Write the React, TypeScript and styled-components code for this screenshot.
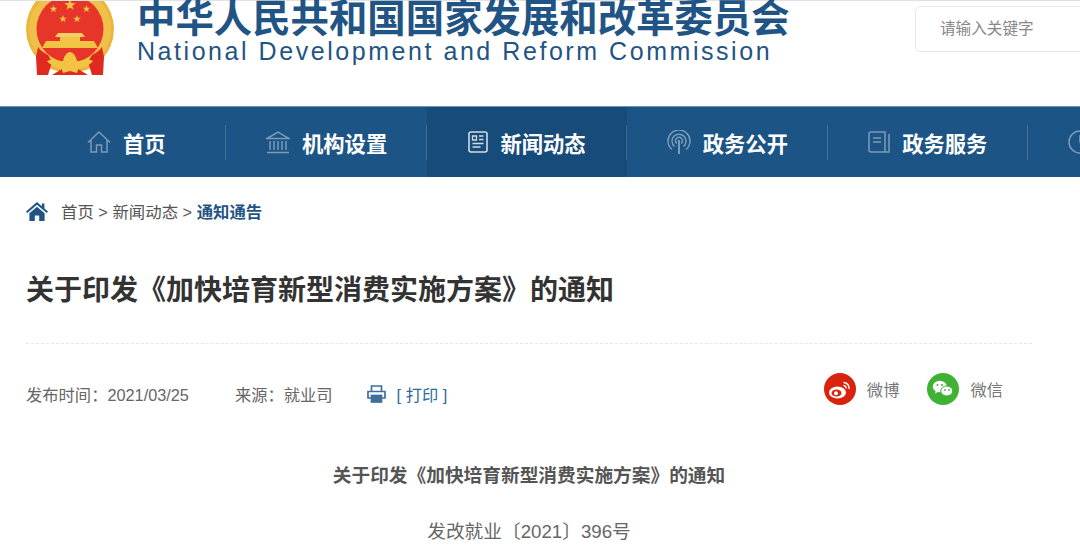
import styled, { createGlobalStyle } from "styled-components";

const GlobalStyle = createGlobalStyle`
  html, body {
    margin: 0;
    padding: 0;
    background: #fff;
    font-family: "Liberation Sans", "Noto Sans CJK SC", sans-serif;
  }
`;

const starPoints = (cx: number, cy: number, r: number) => {
  const pts: string[] = [];
  for (let i = 0; i < 10; i++) {
    const rad = i % 2 === 0 ? r : r * 0.4;
    const a = -Math.PI / 2 + (i * Math.PI) / 5;
    pts.push(`${(cx + rad * Math.cos(a)).toFixed(2)},${(cy + rad * Math.sin(a)).toFixed(2)}`);
  }
  return pts.join(" ");
};

const Emblem = () => (
  <svg width="88" height="75" viewBox="26 0 88 75" style={{ flexShrink: 0 }}>
    <circle cx="70" cy="28" r="44" fill="#eab63c" />
    <circle cx="70" cy="28" r="41" fill="#f0c14a" />
    <circle cx="70" cy="28" r="33.5" fill="#e8352a" />
    <polygon points={starPoints(70, 4, 6)} fill="#f3c344" />
    <polygon points={starPoints(53.5, 8, 4)} fill="#f3c344" />
    <polygon points={starPoints(86.5, 8, 4)} fill="#f3c344" />
    <polygon points={starPoints(63, 18, 4)} fill="#f3c344" />
    <polygon points={starPoints(77, 18, 4)} fill="#f3c344" />
    <path d="M58 32h24l3 4H55z" fill="#f6ce67" />
    <rect x="60" y="36" width="20" height="4" fill="#f3c344" />
    <path d="M46 40h48l4 7H42z" fill="#f3c344" />
    <path d="M38 46c3 4 6 6 10 8l4 7-4 13H37l-1-18z" fill="#e02a1f" />
    <path d="M102 46c-3 4-6 6-10 8l-4 7 4 13h11l1-18z" fill="#e02a1f" />
    <path d="M52 74l10-6h16l10 6z" fill="#e02a1f" />
    <path d="M47 60c6-3 12 1 16 0 1-5 4-9 7-9s6 4 7 9c4 1 10-3 16 0-3 4-9 6-14 6l-2 6-7-2-7 2-2-6c-5 0-11-2-14-6z" fill="#f3c344" />
  </svg>
);

const iconStroke = "rgba(255,255,255,0.42)";

const HomeIcon = () => (
  <svg width="24" height="24" viewBox="0 0 24 24" fill="none" stroke={iconStroke} strokeWidth="1.5">
    <path d="M1 12.5L12 2l11 10.5M4 10v12h5.5v-7h5v7H20V10" />
  </svg>
);

const BankIcon = () => (
  <svg width="24" height="24" viewBox="0 0 24 24" fill="none" stroke={iconStroke} strokeWidth="1.5">
    <path d="M1 8.5L12 2l11 6.5zM4 11v9M8 11v9M12 11v9M16 11v9M20 11v9M1 22.5h22" />
  </svg>
);

const NewsIcon = () => (
  <svg width="20" height="24" viewBox="0 0 20 24" fill="none" stroke="rgba(255,255,255,0.8)" strokeWidth="1.6">
    <rect x="1" y="2" width="18" height="20" rx="2" />
    <path d="M4.5 6h4v4h-4zM11 6h4.5M11 9.5h4.5M4.5 13.5h11M4.5 17h8" strokeWidth="1.3" />
  </svg>
);

const SignalIcon = () => (
  <svg width="24" height="24" viewBox="0 0 24 24" fill="none" stroke={iconStroke} strokeWidth="1.5">
    <path d="M5 19.5a11 11 0 1 1 14 0M7.5 16.5a7 7 0 1 1 9 0M9.8 13.5a3.5 3.5 0 1 1 4.4 0" />
    <path d="M12 10v14" strokeWidth="2" />
  </svg>
);

const DocIcon = () => (
  <svg width="22" height="22" viewBox="0 0 22 22" fill="none" stroke={iconStroke} strokeWidth="1.5">
    <path d="M17 1H3a2 2 0 0 0-2 2v16a2 2 0 0 0 2 2h14zM21 3v18h-4M5 7h8M5 11h8" />
  </svg>
);

const ClockIcon = () => (
  <svg width="24" height="24" viewBox="0 0 24 24" fill="none" stroke={iconStroke} strokeWidth="1.5">
    <circle cx="12" cy="12" r="11" />
    <path d="M12 5v7h7" />
  </svg>
);

const BreadcrumbHome = () => (
  <svg width="22" height="19" viewBox="0 0 22 19" fill="#1f5484">
    <path d="M11 0L0 9.6l1.3 1.5L11 2.8l9.7 8.3L22 9.6l-3.6-3.1V1.5h-2.6v2.8z" />
    <path d="M11 4.8L3.4 11.2V19h5.4v-5.4h4.4V19h5.4v-7.8z" />
  </svg>
);

const PrinterIcon = () => (
  <svg width="19" height="18" viewBox="0 0 19 18" fill="none" stroke="#3f6f9c" strokeWidth="1.7">
    <path d="M4.5 6V1h10v5" />
    <path d="M4 13H1V6.5h17V13h-3" fill="none" />
    <rect x="4.5" y="10.5" width="10" height="6.5" fill="#3f6f9c" />
  </svg>
);

const WeiboIcon = () => (
  <svg width="32" height="32" viewBox="0 0 32 32">
    <circle cx="16" cy="16" r="16" fill="#d9230f" />
    <ellipse cx="13.5" cy="19.5" rx="8.5" ry="6" fill="#fff" />
    <ellipse cx="12.5" cy="20" rx="5" ry="3.6" fill="#d9230f" />
    <circle cx="12" cy="20.3" r="2" fill="#fff" />
    <path d="M19.5 9.5a5.5 5.5 0 0 1 5.5 6.5M19.5 12.5a2.6 2.6 0 0 1 2.6 3" fill="none" stroke="#fff" strokeWidth="1.5" />
  </svg>
);

const WechatIcon = () => (
  <svg width="32" height="32" viewBox="0 0 32 32">
    <circle cx="16" cy="16" r="16" fill="#3fb234" />
    <ellipse cx="12.8" cy="13.5" rx="7" ry="5.8" fill="#fff" />
    <path d="M9 17l-1 3.5 4-2z" fill="#fff" />
    <ellipse cx="19.8" cy="18" rx="6" ry="5" fill="#fff" stroke="#3fb234" strokeWidth="1" />
    <circle cx="10.5" cy="12" r="1" fill="#3fb234" />
    <circle cx="15" cy="12" r="1" fill="#3fb234" />
    <circle cx="18" cy="17" r="0.9" fill="#3fb234" />
    <circle cx="22" cy="17" r="0.9" fill="#3fb234" />
  </svg>
);

const navItems = [
  { label: "首页", icon: <HomeIcon /> },
  { label: "机构设置", icon: <BankIcon /> },
  { label: "新闻动态", icon: <NewsIcon />, active: true },
  { label: "政务公开", icon: <SignalIcon /> },
  { label: "政务服务", icon: <DocIcon /> },
  { label: "互动交流", icon: <ClockIcon /> },
];

export default function App() {
  return (
    <Page>
      <GlobalStyle />
      <Header>
        <Emblem />
        <Brand>
          <BrandCn>中华人民共和国国家发展和改革委员会</BrandCn>
          <BrandEn>National Development and Reform Commission</BrandEn>
        </Brand>
        <Search>请输入关键字</Search>
      </Header>
      <Nav>
        {navItems.map((item) => (
          <NavItem key={item.label} $active={item.active}>
            {item.icon}
            <span>{item.label}</span>
          </NavItem>
        ))}
      </Nav>
      <Main>
        <Breadcrumb>
          <BreadcrumbHome />
          <Trail>
            首页 &gt; 新闻动态 &gt; <b>通知通告</b>
          </Trail>
        </Breadcrumb>
        <Title>关于印发《加快培育新型消费实施方案》的通知</Title>
        <MetaRow>
          <MetaText>发布时间：2021/03/25</MetaText>
          <MetaText>来源：就业司</MetaText>
          <PrintLink>
            <PrinterIcon />
            <span>[ 打印 ]</span>
          </PrintLink>
          <Share>
            <ShareItem>
              <WeiboIcon />
              <span>微博</span>
            </ShareItem>
            <ShareItem>
              <WechatIcon />
              <span>微信</span>
            </ShareItem>
          </Share>
        </MetaRow>
        <ArticleHeading>关于印发《加快培育新型消费实施方案》的通知</ArticleHeading>
        <DocNumber>发改就业〔2021〕396号</DocNumber>
      </Main>
    </Page>
  );
}

const Page = styled.div`
  width: 1080px;
  height: 551px;
  overflow: hidden;
`;

const Header = styled.header`
  display: flex;
  align-items: flex-start;
  height: 105px;
  padding-left: 26px;
  border-top: 1px solid #e2e2e2;
  box-sizing: content-box;
`;

const Brand = styled.div`
  display: flex;
  flex-direction: column;
  flex-shrink: 0;
  width: 653px;
  margin-left: 23px;
  color: #1f5484;
  white-space: nowrap;
`;

const BrandCn = styled.div`
  font-size: 38.4px;
  line-height: 36px;
  font-weight: 700;
`;

const BrandEn = styled.div`
  font-size: 25px;
  line-height: 28px;
  letter-spacing: 2.55px;
`;

const Search = styled.div`
  flex-shrink: 0;
  width: 200px;
  height: 44px;
  margin: 5px 0 0 125px;
  padding-left: 24px;
  border: 1px solid #e8e8e8;
  border-radius: 5px;
  font-size: 15.6px;
  line-height: 44px;
  color: #888;
`;

const Nav = styled.nav`
  display: flex;
  height: 70px;
  padding-left: 26px;
  background: #1c5485;
  border-top: 1px solid #6f93b3;
`;

const NavItem = styled.div<{ $active?: boolean }>`
  position: relative;
  display: flex;
  flex: 0 0 200.4px;
  align-items: center;
  justify-content: center;
  gap: 12px;
  background: ${(p) => (p.$active ? "#174b7a" : "transparent")};
  color: #fff;
  font-size: 21.3px;
  font-weight: 700;

  &::after {
    content: "";
    position: absolute;
    right: 0;
    top: 18px;
    height: 35px;
    width: 1px;
    background: rgba(255, 255, 255, 0.16);
  }
`;

const Main = styled.main`
  padding: 0 48px 0 26px;
`;

const Breadcrumb = styled.div`
  display: flex;
  align-items: center;
  gap: 13px;
  height: 68px;
`;

const Trail = styled.div`
  font-size: 16.4px;
  color: #555;

  b {
    color: #1f5484;
  }
`;

const Title = styled.h1`
  margin: 0;
  padding: 26px 0 32px;
  border-bottom: 1px dashed #e6e6e6;
  font-size: 28px;
  line-height: 40px;
  font-weight: 700;
  color: #333;
`;

const MetaRow = styled.div`
  display: flex;
  align-items: center;
  height: 100px;
  padding-right: 29px;
`;

const MetaText = styled.span`
  margin-right: 46px;
  font-size: 16.3px;
  color: #666;
`;

const PrintLink = styled.span`
  display: flex;
  align-items: center;
  gap: 11px;
  margin-left: -12px;
  font-size: 16.3px;
  color: #2f6a9c;
`;

const Share = styled.div`
  display: flex;
  gap: 28px;
  margin-left: auto;
  margin-top: -10px;
`;

const ShareItem = styled.div`
  display: flex;
  align-items: center;
  gap: 11px;
  font-size: 16.3px;
  color: #777;
`;

const ArticleHeading = styled.h2`
  margin: 18px 0 0;
  font-size: 18.7px;
  line-height: 28px;
  font-weight: 700;
  text-align: center;
  color: #555;
`;

const DocNumber = styled.p`
  margin: 28px 0 0;
  font-size: 18.7px;
  line-height: 28px;
  text-align: center;
  color: #666;
`;
